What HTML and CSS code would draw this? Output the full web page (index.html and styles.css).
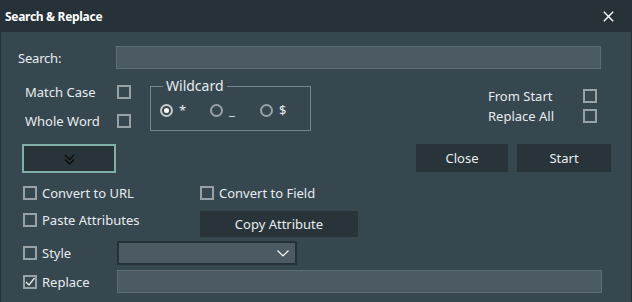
FILE: index.html
```html
<!DOCTYPE html>
<html lang="en">
<head>
    <meta charset="UTF-8">
    <title>Search &amp; Replace</title>
    <link rel="stylesheet" href="styles.css">
</head>
<body>
<div class="window">
    <div class="titlebar">
        <span class="title">Search &amp; Replace</span>
        <svg class="close" width="11" height="11" viewBox="0 0 11 11"><path d="M0.8 0.8 L10.2 10.2 M10.2 0.8 L0.8 10.2" stroke="#fff" stroke-width="1.4"/></svg>
    </div>
    <div class="content">
        <div class="row search-row">
            <span class="search-label">Search:</span>
            <div class="field wide"></div>
        </div>

        <div class="row options-row">
            <div class="opts-left">
                <div class="opt"><span class="opt-label">Match Case</span><span class="check"></span></div>
                <div class="opt"><span class="opt-label">Whole Word</span><span class="check"></span></div>
            </div>
            <fieldset class="wildcard">
                <legend>Wildcard</legend>
                <span class="radio on"></span><span class="rlabel">*</span>
                <span class="radio"></span><span class="rlabel">_</span>
                <span class="radio"></span><span class="rlabel">$</span>
            </fieldset>
            <div class="opts-right">
                <div class="opt small"><span class="opt-label">From Start</span><span class="check"></span></div>
                <div class="opt small"><span class="opt-label">Replace All</span><span class="check"></span></div>
            </div>
        </div>

        <div class="row button-row">
            <div class="expander">
                <svg width="11" height="11" viewBox="0 0 11 11"><path d="M1 1 L5.5 5.5 L10 1 M1 5.5 L5.5 10 L10 5.5" stroke="#0d0d0d" stroke-width="1.5" fill="none"/></svg>
            </div>
            <div class="btn close-btn">Close</div>
            <div class="btn start-btn">Start</div>
        </div>

        <div class="row line">
            <div class="item first"><span class="check"></span>Convert to URL</div>
            <div class="item"><span class="check"></span>Convert to Field</div>
        </div>
        <div class="row line paste-row">
            <div class="item first"><span class="check"></span>Paste Attributes</div>
            <div class="btn copy-btn">Copy Attribute</div>
        </div>
        <div class="row line style-row">
            <div class="item first narrow"><span class="check"></span>Style</div>
            <div class="select">
                <svg width="12" height="7" viewBox="0 0 12 7"><path d="M0.5 0.5 L6 6 L11.5 0.5" stroke="#fff" stroke-width="1.1" fill="none"/></svg>
            </div>
        </div>
        <div class="row line replace-row">
            <div class="item first narrow"><span class="check checked"><svg width="10" height="10" viewBox="0 0 10 10"><path d="M1 5 L4 8 L9.5 1" stroke="#e6ecef" stroke-width="1.3" fill="none"/></svg></span>Replace</div>
            <div class="field wide"></div>
        </div>
    </div>
</div>
</body>
</html>
```

FILE: styles.css
```css
body { margin: 0; background: #263238; font-family: "Noto Sans", "Open Sans", sans-serif; font-size: 13px; color: #e6ecef; }
.window { width: 632px; height: 302px; display: flex; flex-direction: column; }
.titlebar { height: 32px; display: flex; align-items: center; justify-content: space-between; padding: 0 18px 0 5px; box-sizing: border-box; background: #263238; }
.title { font-weight: bold; color: #fff; font-size: 12px; letter-spacing: -0.3px; }
.close { margin-top: 0; }
.content { flex: 1; background: #37474f; margin: 0 1px; padding-top: 14px; }

.row { display: flex; align-items: center; }
.field { height: 23px; box-sizing: border-box; background: #4b5a63; border: 1px solid #5f6c72; }
.wide { width: 485px; }

.search-row { padding-left: 17px; }
.search-label { width: 98px; letter-spacing: -0.2px; }

.options-row { align-items: flex-start; height: 67px; margin-top: 8px; }
.opts-left { padding-left: 24px; }
.opt { display: flex; align-items: center; height: 29px; }
.opt-label { width: 92px; }
.opt.small { height: 20px; }
.opt.small .opt-label { width: 95px; }

.check { width: 14px; height: 14px; box-sizing: border-box; border: 2px solid #98a2a6; display: inline-flex; align-items: center; justify-content: center; }
.check svg { display: block; }

.wildcard { margin: 2px 0 0 19px; padding: 0 0 0 9px; width: 161px; height: 52px; box-sizing: border-box; border: 1px solid #76858b; display: flex; align-items: flex-start; }
.wildcard legend { padding: 0 3px; margin-left: 3px; line-height: 14px; font-size: 14px; }
.radio { width: 13px; height: 13px; box-sizing: border-box; border: 2px solid #98a2a6; border-radius: 50%; display: inline-flex; align-items: center; justify-content: center; margin-top: 11px; }
.radio.on { border-color: #c3cbce; }
.radio.on::after { content: ""; width: 5px; height: 5px; border-radius: 50%; background: #fff; }
.rlabel { width: 37px; padding-left: 6px; margin-top: 8px; line-height: 18px; box-sizing: border-box; }
.opts-right { margin-left: auto; margin-right: 34px; margin-top: 9px; }

.expander { margin-left: 21px; width: 94px; height: 29px; box-sizing: border-box; border: 2px solid #7fb0a8; background: #29343a; display: flex; align-items: center; justify-content: center; }
.expander svg { margin-top: 2px; }
.btn { height: 28px; background: #29343a; display: flex; align-items: center; justify-content: center; }
.close-btn { width: 92px; margin-left: auto; }
.start-btn { width: 94px; margin-left: 9px; margin-right: 20px; }
.button-row { align-items: flex-start; }

.line { height: 27px; }
.button-row + .line { margin-top: 6px; }
.item { display: flex; align-items: center; width: 177px; }
.item .check { margin-right: 5px; }
.item.first { margin-left: 22px; }
.item.narrow { width: 94px; }
.paste-row { height: 26px; margin-top: 5px; align-items: flex-start; }
.paste-row .item { height: 18px; }
.copy-btn { width: 158px; height: 26px; }
.style-row { height: 24px; margin-top: 4px; }
.select { width: 180px; height: 24px; box-sizing: border-box; border: 2px solid #263238; background: #4b5a63; display: flex; align-items: center; justify-content: flex-end; padding-right: 6px; }
.replace-row { height: 23px; margin-top: 5px; }
```
